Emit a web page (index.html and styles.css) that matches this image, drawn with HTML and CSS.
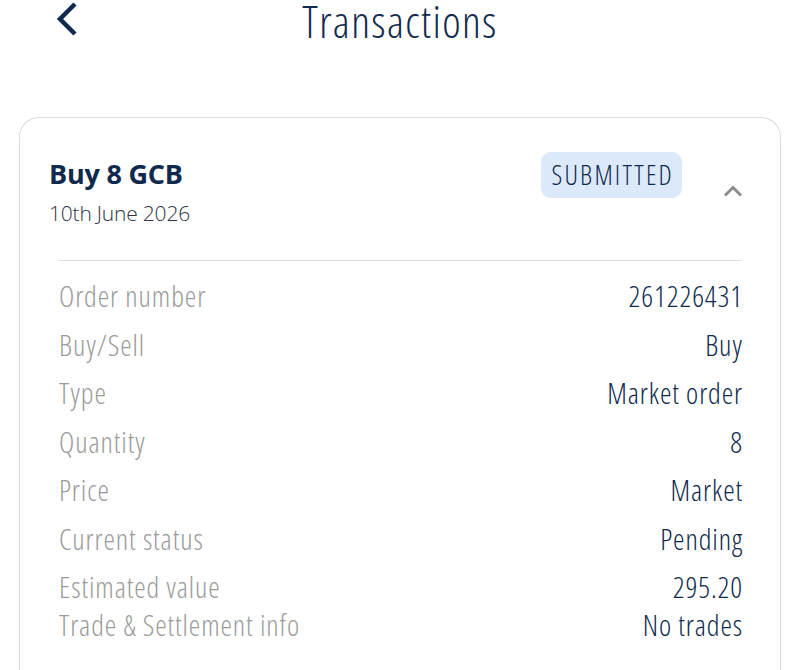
FILE: index.html
```html
<!DOCTYPE html>
<html lang="en">
<head>
<meta charset="utf-8">
<title>Transactions</title>
<link rel="stylesheet" href="styles.css">
</head>
<body>
<header class="topbar">
  <button class="back" aria-label="Back">
    <svg width="22" height="34" viewBox="0 0 22 34"><polyline points="19,2 4,17 19,32" fill="none" stroke="#0f2a4d" stroke-width="4.5"/></svg>
  </button>
  <h1 class="title">Transactions</h1>
  <span></span>
</header>
<section class="card">
  <div class="card-head">
    <div class="head-left">
      <h2 class="order-title">Buy 8 GCB</h2>
      <div class="date">10th June 2026</div>
    </div>
    <span class="badge">SUBMITTED</span>
    <svg class="collapse" width="20" height="12" viewBox="0 0 20 12"><polyline points="2,10.5 10,2.5 18,10.5" fill="none" stroke="#8c8c8c" stroke-width="3"/></svg>
  </div>
  <div class="divider"></div>
  <dl class="details">
    <div class="row"><dt>Order number</dt><dd>261226431</dd></div>
    <div class="row"><dt>Buy/Sell</dt><dd>Buy</dd></div>
    <div class="row"><dt>Type</dt><dd>Market order</dd></div>
    <div class="row"><dt>Quantity</dt><dd>8</dd></div>
    <div class="row"><dt>Price</dt><dd>Market</dd></div>
    <div class="row"><dt>Current status</dt><dd>Pending</dd></div>
    <div class="row"><dt>Estimated value</dt><dd>295.20</dd></div>
    <div class="row last"><dt>Trade &amp; Settlement info</dt><dd>No trades</dd></div>
  </dl>
</section>
</body>
</html>
```
FILE: styles.css
```css
html, body {
  margin: 0;
  padding: 0;
  background: #ffffff;
}
body {
  font-family: "Open Sans", "Noto Sans", sans-serif;
  color: #0f2a4d;
  overflow: hidden;
  height: 670px;
}
.topbar {
  display: grid;
  grid-template-columns: 1fr auto 1fr;
  height: 117px;
}
.back {
  justify-self: start;
  align-self: start;
  margin: 2px 0 0 56px;
  padding: 0;
  border: 0;
  background: none;
  display: flex;
}
.title {
  margin: 0;
  font-size: 44px;
  line-height: 42px;
  font-weight: 300;
  font-stretch: 80%;
  letter-spacing: 1.4px;
  color: #132b4e;
}
.card {
  margin: 0 19px 0 19px;
  border: 1px solid #dcdcdc;
  border-bottom: 0;
  border-radius: 20px 20px 0 0;
  height: 600px;
}
.card-head {
  display: flex;
  align-items: flex-start;
  padding: 34px 37px 0 29px;
}
.head-left {
  flex: 1;
  margin-top: 6px;
}
.order-title {
  margin: 0;
  font-size: 27px;
  line-height: 32px;
  font-weight: 700;
  font-stretch: 100%;
  letter-spacing: -0.2px;
  color: #0f2a4d;
}
.date {
  margin-top: 10px;
  font-size: 21px;
  line-height: 26px;
  font-weight: 300;
  font-stretch: 100%;
  letter-spacing: -0.2px;
  color: #2e3440;
}
.badge {
  background: #dce9fb;
  border-radius: 10px;
  height: 46px;
  line-height: 46px;
  padding: 0 8px 0 10px;
  font-size: 27px;
  font-weight: 300;
  font-stretch: 80%;
  letter-spacing: 2.2px;
  color: #0f2a4d;
}
.collapse {
  margin: 33px 0 0 41px;
}
.divider {
  height: 1px;
  background: #e0e0e0;
  margin: 34px 38px 0 38px;
}
.details {
  margin: 11px 38px 0 39px;
}
.row {
  display: flex;
  justify-content: space-between;
  font-size: 29px;
  line-height: 48.5px;
  font-stretch: 80%;
  letter-spacing: 0.9px;
}
.row.last {
  margin-top: -11px;
}
.row dt {
  font-weight: 300;
  color: #9b9b9b;
}
.row dd {
  margin: 0 -1px 0 0;
  font-weight: 350;
  color: #0f2a4d;
}
```
